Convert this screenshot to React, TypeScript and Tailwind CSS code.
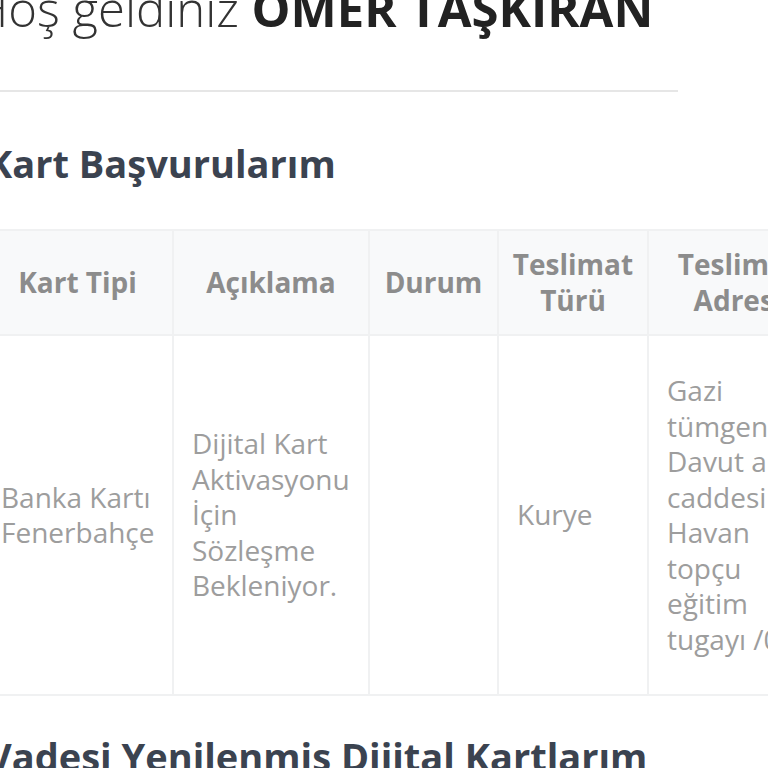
const headers = ["Kart Tipi", "Açıklama", "Durum", "Teslimat Türü", "Teslimat Adresi"];

function Lines({ lines }: { lines: string[] }) {
  return (
    <>
      {lines.map((l, i) => (
        <span key={i} className="block whitespace-nowrap">
          {l}
        </span>
      ))}
    </>
  );
}

const cell = "border-2 border-[#f0f1f2] px-[18px] py-[37px] overflow-hidden";

export default function App() {
  return (
    <div className="w-[768px] h-[768px] overflow-hidden bg-white font-['Open_Sans',sans-serif]">
      <div className="ml-[-19px] w-[900px]">
        <h1 className="mt-[-22px] ml-[-8px] text-[49px] leading-[60px] font-light text-[#333] whitespace-nowrap">
          Hoş geldiniz <span className="font-bold text-[#222]">ÖMER TAŞKIRAN</span>
        </h1>
        <div className="mt-[52px] h-[2px] w-[697px] bg-[#e6e6e6]" />

        <h2 className="mt-[47px] ml-[6px] text-[38px] leading-[48px] font-bold text-[#3b4350]">
          Kart Başvurularım
        </h2>

        <table className="mt-[42px] table-fixed w-[846px] border-collapse text-[28px] leading-[35.5px]">
          <colgroup>
            <col className="w-[191px]" />
            <col className="w-[196px]" />
            <col className="w-[129px]" />
            <col className="w-[150px]" />
            <col className="w-[180px]" />
          </colgroup>
          <thead>
            <tr className="bg-[#f8f9fa]">
              {headers.map((h) => (
                <th
                  key={h}
                  className="border-2 border-[#f0f1f2] py-[16px] px-[4px] font-bold text-[#8c8c8c] text-center whitespace-nowrap"
                >
                  {h === "Teslimat Türü" ? (
                    <Lines lines={["Teslimat", "Türü"]} />
                  ) : h === "Teslimat Adresi" ? (
                    <Lines lines={["Teslimat", "Adresi"]} />
                  ) : (
                    h
                  )}
                </th>
              ))}
            </tr>
          </thead>
          <tbody className="text-[#9d9d9d] align-middle">
            <tr>
              <td className={cell}>
                <Lines lines={["Banka Kartı", "Fenerbahçe"]} />
              </td>
              <td className={cell}>
                <Lines lines={["Dijital Kart", "Aktivasyonu", "İçin", "Sözleşme", "Bekleniyor."]} />
              </td>
              <td className={cell} />
              <td className={cell}>Kurye</td>
              <td className={cell}>
                <Lines
                  lines={["Gazi", "tümgeneral", "Davut abalı", "caddesi No", "Havan", "topçu", "eğitim", "tugayı /0"]}
                />
              </td>
            </tr>
          </tbody>
        </table>

        <h2 className="mt-[36px] ml-[6px] text-[38px] leading-[48px] font-bold text-[#3b4350] whitespace-nowrap">
          Vadesi Yenilenmiş Dijital Kartlarım
        </h2>
      </div>
    </div>
  );
}
